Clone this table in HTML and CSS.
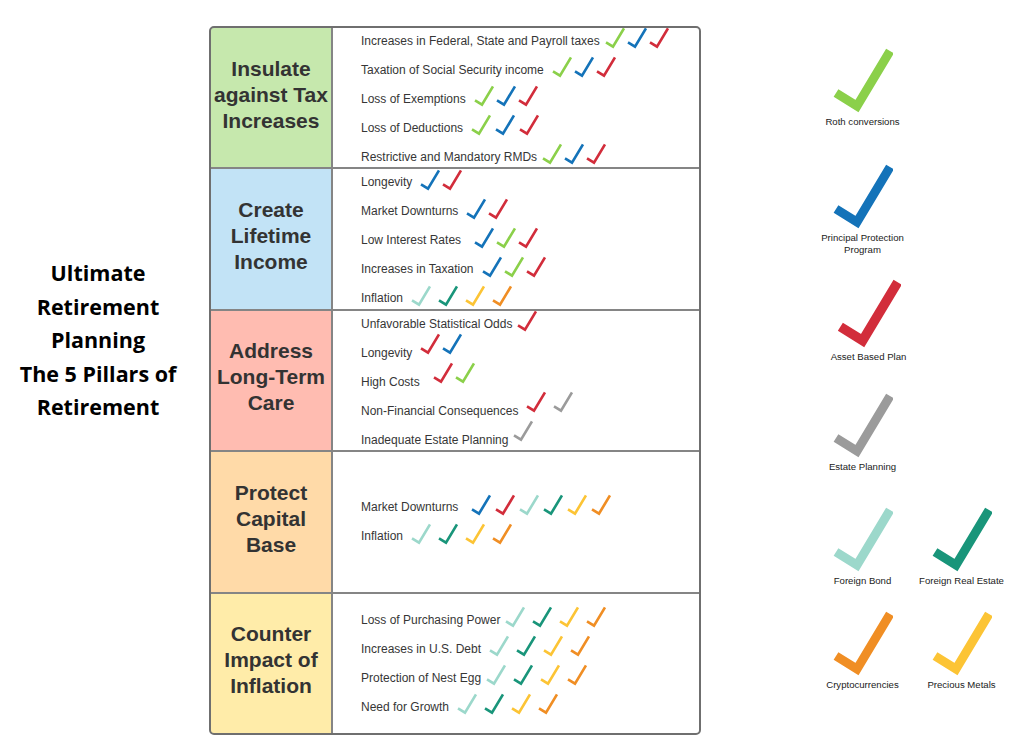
FILE: index.html
```html
<!DOCTYPE html>
<html>
<head>
<meta charset="utf-8">
<link rel="stylesheet" href="styles.css">
</head>
<body>
<svg class="defs" width="0" height="0" aria-hidden="true">
  <symbol id="ck" viewBox="0 0 60 66"><path d="M3 46 L24 59 L57 4" fill="none"/></symbol>
</svg>
<div class="page">
  <div class="title">Ultimate<br>Retirement<br>Planning<br>The 5 Pillars of<br>Retirement</div>

  <div class="table">
    <div class="pillar p-green"><div>Insulate against Tax Increases</div></div>
    <div class="items full">
      <div class="item"><span>Increases in Federal, State and Payroll taxes</span><span class="checks near"><svg class="c g"><use href="#ck"/></svg><svg class="c b"><use href="#ck"/></svg><svg class="c r"><use href="#ck"/></svg></span></div>
      <div class="item"><span>Taxation of Social Security income</span><span class="checks"><svg class="c g"><use href="#ck"/></svg><svg class="c b"><use href="#ck"/></svg><svg class="c r"><use href="#ck"/></svg></span></div>
      <div class="item"><span>Loss of Exemptions</span><span class="checks"><svg class="c g"><use href="#ck"/></svg><svg class="c b"><use href="#ck"/></svg><svg class="c r"><use href="#ck"/></svg></span></div>
      <div class="item"><span>Loss of Deductions</span><span class="checks mid"><svg class="c g"><use href="#ck"/></svg><svg class="c b"><use href="#ck"/></svg><svg class="c r"><use href="#ck"/></svg></span></div>
      <div class="item"><span>Restrictive and Mandatory RMDs</span><span class="checks near"><svg class="c g"><use href="#ck"/></svg><svg class="c b"><use href="#ck"/></svg><svg class="c r"><use href="#ck"/></svg></span></div>
    </div>

    <div class="pillar p-blue"><div>Create Lifetime Income</div></div>
    <div class="items full">
      <div class="item"><span>Longevity</span><span class="checks"><svg class="c b"><use href="#ck"/></svg><svg class="c r"><use href="#ck"/></svg></span></div>
      <div class="item"><span>Market Downturns</span><span class="checks"><svg class="c b"><use href="#ck"/></svg><svg class="c r"><use href="#ck"/></svg></span></div>
      <div class="item"><span>Low Interest Rates</span><span class="checks far"><svg class="c b"><use href="#ck"/></svg><svg class="c g"><use href="#ck"/></svg><svg class="c r"><use href="#ck"/></svg></span></div>
      <div class="item"><span>Increases in Taxation</span><span class="checks"><svg class="c b"><use href="#ck"/></svg><svg class="c g"><use href="#ck"/></svg><svg class="c r"><use href="#ck"/></svg></span></div>
      <div class="item"><span>Inflation</span><span class="checks wide"><svg class="c lt"><use href="#ck"/></svg><svg class="c dt"><use href="#ck"/></svg><svg class="c y"><use href="#ck"/></svg><svg class="c o"><use href="#ck"/></svg></span></div>
    </div>

    <div class="pillar p-red"><div>Address Long-Term Care</div></div>
    <div class="items full">
      <div class="item"><span>Unfavorable Statistical Odds</span><span class="checks near"><svg class="c r"><use href="#ck"/></svg></span></div>
      <div class="item"><span>Longevity</span><span class="checks up"><svg class="c r"><use href="#ck"/></svg><svg class="c b"><use href="#ck"/></svg></span></div>
      <div class="item"><span>High Costs</span><span class="checks far up"><svg class="c r"><use href="#ck"/></svg><svg class="c g"><use href="#ck"/></svg></span></div>
      <div class="item"><span>Non-Financial Consequences</span><span class="checks wide up"><svg class="c r"><use href="#ck"/></svg><svg class="c gy"><use href="#ck"/></svg></span></div>
      <div class="item"><span>Inadequate Estate Planning</span><span class="checks near up"><svg class="c gy"><use href="#ck"/></svg></span></div>
    </div>

    <div class="pillar p-orange"><div>Protect Capital Base</div></div>
    <div class="items">
      <div class="item"><span>Market Downturns</span><span class="checks far mid"><svg class="c b"><use href="#ck"/></svg><svg class="c r"><use href="#ck"/></svg><svg class="c lt"><use href="#ck"/></svg><svg class="c dt"><use href="#ck"/></svg><svg class="c y"><use href="#ck"/></svg><svg class="c o"><use href="#ck"/></svg></span></div>
      <div class="item"><span>Inflation</span><span class="checks wide"><svg class="c lt"><use href="#ck"/></svg><svg class="c dt"><use href="#ck"/></svg><svg class="c y"><use href="#ck"/></svg><svg class="c o"><use href="#ck"/></svg></span></div>
    </div>

    <div class="pillar p-yellow"><div>Counter Impact of Inflation</div></div>
    <div class="items">
      <div class="item"><span>Loss of Purchasing Power</span><span class="checks near wide"><svg class="c lt"><use href="#ck"/></svg><svg class="c dt"><use href="#ck"/></svg><svg class="c y"><use href="#ck"/></svg><svg class="c o"><use href="#ck"/></svg></span></div>
      <div class="item"><span>Increases in U.S. Debt</span><span class="checks wide"><svg class="c lt"><use href="#ck"/></svg><svg class="c dt"><use href="#ck"/></svg><svg class="c y"><use href="#ck"/></svg><svg class="c o"><use href="#ck"/></svg></span></div>
      <div class="item"><span>Protection of Nest Egg</span><span class="checks near wide"><svg class="c lt"><use href="#ck"/></svg><svg class="c dt"><use href="#ck"/></svg><svg class="c y"><use href="#ck"/></svg><svg class="c o"><use href="#ck"/></svg></span></div>
      <div class="item"><span>Need for Growth</span><span class="checks wide"><svg class="c lt"><use href="#ck"/></svg><svg class="c dt"><use href="#ck"/></svg><svg class="c y"><use href="#ck"/></svg><svg class="c o"><use href="#ck"/></svg></span></div>
    </div>
  </div>

  <div class="legend">
    <div class="key k1"><svg class="big g"><use href="#ck"/></svg><div class="label">Roth conversions</div></div>
    <div class="key k1"><svg class="big b"><use href="#ck"/></svg><div class="label">Principal Protection<br>Program</div></div>
    <div class="key k1 shift"><svg class="big large r"><use href="#ck"/></svg><div class="label">Asset Based Plan</div></div>
    <div class="key k1"><svg class="big gy"><use href="#ck"/></svg><div class="label">Estate Planning</div></div>
    <div class="key k1"><svg class="big lt"><use href="#ck"/></svg><div class="label">Foreign Bond</div></div>
    <div class="key k2"><svg class="big dt"><use href="#ck"/></svg><div class="label">Foreign Real Estate</div></div>
    <div class="key k1"><svg class="big o"><use href="#ck"/></svg><div class="label">Cryptocurrencies</div></div>
    <div class="key k2"><svg class="big y"><use href="#ck"/></svg><div class="label">Precious Metals</div></div>
  </div>
</div>
</body>
</html>
```
FILE: styles.css
```css
html, body {
  margin: 0;
  padding: 0;
  background: #ffffff;
}

.defs {
  position: absolute;
  width: 0;
  height: 0;
  overflow: hidden;
}

.page {
  display: flex;
  align-items: flex-start;
  width: 1024px;
  height: 750px;
  font-family: "Liberation Sans", Arial, sans-serif;
}

.title {
  width: 196px;
  flex: none;
  padding-top: 256px;
  text-align: center;
  font-family: "Open Sans", "Liberation Sans", sans-serif;
  font-weight: 700;
  font-size: 21.5px;
  line-height: 33.5px;
  color: #000;
}

.table {
  flex: none;
  margin-left: 13px;
  margin-top: 26px;
  width: 492px;
  height: 709px;
  box-sizing: border-box;
  border: 2px solid #6f6f6f;
  border-radius: 5px;
  overflow: hidden;
  background: #858585;
  display: grid;
  grid-template-columns: 120px 1fr;
  grid-template-rows: repeat(5, 1fr);
  gap: 2px;
}

.pillar {
  display: flex;
  align-items: center;
  justify-content: center;
  text-align: center;
  padding-bottom: 6px;
  box-sizing: border-box;
  font-weight: 700;
  font-size: 21px;
  line-height: 26px;
  color: #333333;
}

.pillar div {
  width: 120px;
}

.p-green { background: #c6e8ad; }
.p-blue { background: #c2e3f6; }
.p-red { background: #ffbcb1; }
.p-orange { background: #ffdaa8; }
.p-yellow { background: #ffeca9; }

.items {
  background: #ffffff;
  display: flex;
  flex-direction: column;
  justify-content: center;
  padding-left: 28px;
  min-height: 0;
  box-sizing: border-box;
}

.items.full {
  padding-top: 2px;
}

.item {
  display: flex;
  align-items: center;
  height: 29px;
  flex: none;
  font-size: 12px;
  color: #363636;
  white-space: nowrap;
}

.checks {
  display: flex;
  gap: 2px;
  margin-left: 8px;
  margin-bottom: 5px;
}

.checks.near { margin-left: 5px; }
.checks.far { margin-left: 13px; }
.checks.mid { gap: 4px; }
.checks.wide { gap: 7px; }
.checks.up { margin-bottom: 17px; }

svg.c {
  width: 20px;
  height: 22px;
  stroke-width: 8;
  stroke-linejoin: miter;
  stroke-linecap: butt;
  fill: none;
}

svg.big {
  width: 60px;
  height: 66px;
  stroke-width: 9;
  stroke-linejoin: miter;
  stroke-linecap: butt;
  fill: none;
}

svg.big.large {
  width: 64px;
  height: 70px;
}

.g { stroke: #8bd04a; }
.b { stroke: #1473b9; }
.r { stroke: #d22d3b; }
.gy { stroke: #9b9b9b; }
.lt { stroke: #9cd8cb; }
.dt { stroke: #19957a; }
.y { stroke: #fcc435; }
.o { stroke: #f08e24; }

.legend {
  flex: none;
  margin-left: 112px;
  padding-top: 47px;
  display: grid;
  grid-template-columns: 99px 99px;
  grid-template-rows: 116px 115px 114px 114px 104px;
}

.key {
  display: flex;
  flex-direction: column;
  align-items: center;
}

.k1 { grid-column: 1; }
.k2 { grid-column: 2; }

.shift {
  padding-left: 12px;
}

.label {
  margin-top: 3px;
  font-size: 9.6px;
  line-height: 12px;
  color: #222;
  text-align: center;
  white-space: nowrap;
}
```
